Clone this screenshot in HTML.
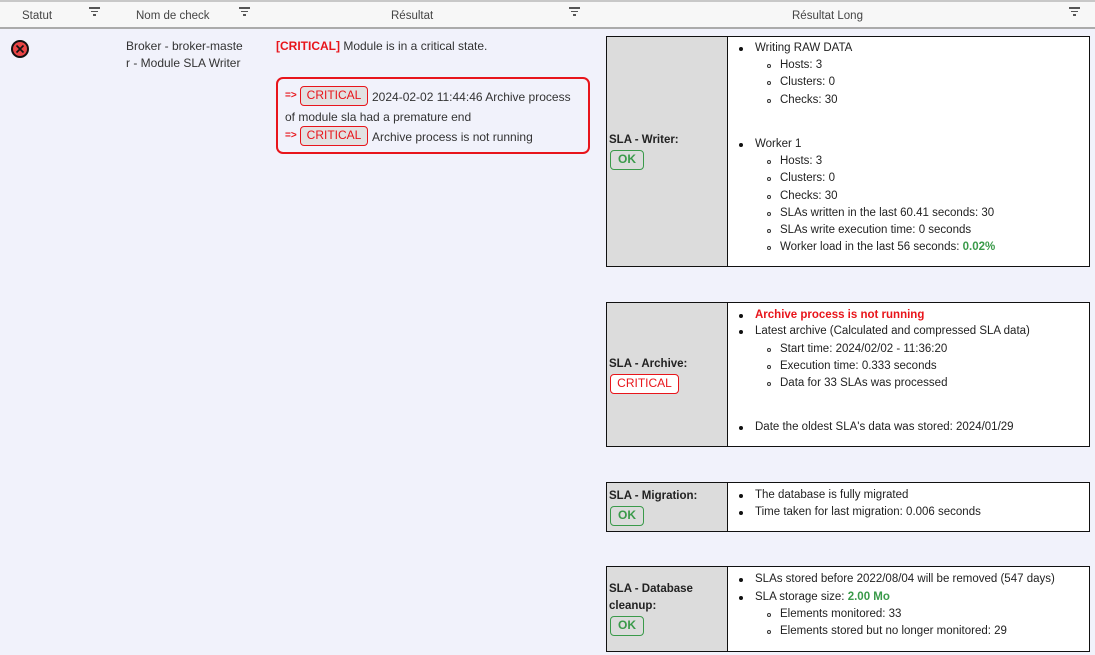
<!DOCTYPE html>
<html><head><meta charset="utf-8"><style>
*{margin:0;padding:0;box-sizing:border-box}
body{width:1095px;height:655px;overflow:hidden;background:#f1f2fb;font-family:"Liberation Sans",sans-serif;font-size:11.5px;color:#222;position:relative}
.a{position:absolute;white-space:nowrap;line-height:16px}
.hdr{position:absolute;left:0;top:0;width:1095px;height:29px;background:#f7f7f7;border-top:2px solid #c8c8c8;border-bottom:2px solid #ababab}
.h{position:absolute;top:8px;font-size:11.5px;color:#444}
.f{position:absolute;top:5px;width:11px;height:8px}
.f i{display:block;height:1.5px;background:#555;margin:0 auto 2px}
.tb{position:absolute;left:606px;width:484px;border:1px solid #111;background:#fff}
.tb .l{position:absolute;left:0;top:0;bottom:0;width:121px;background:#dcdcdc;border-right:1px solid #111}
.b{position:absolute;font-weight:bold;font-size:11.5px;line-height:17px;white-space:nowrap}
.badge{position:absolute;border:1px solid;border-radius:4px;font-size:12px;line-height:17px;height:20px;text-align:center}
.ok{color:#3a9a4a;border-color:#3a9a4a;font-weight:bold;width:34px}
.cr{color:#e8151b;border-color:#e8151b;background:#fff}
.dot:before{content:"";position:absolute;left:-16px;top:7px;width:4px;height:4px;border-radius:50%;background:#111}
.cir:before{content:"";position:absolute;left:-13px;top:7px;width:4px;height:4px;border-radius:50%;border:1px solid #333;box-sizing:border-box}
.t{font-size:12px;color:#333}
</style></head><body>
<div class="hdr">
<div class="h" style="left:22px">Statut</div>
<div class="f" style="left:89px"><i style="width:11px"></i><i style="width:7px"></i><i style="width:3px"></i></div>
<div class="h" style="left:136px">Nom de check</div>
<div class="f" style="left:239px"><i style="width:11px"></i><i style="width:7px"></i><i style="width:3px"></i></div>
<div class="h" style="left:391px">Résultat</div>
<div class="f" style="left:569px"><i style="width:11px"></i><i style="width:7px"></i><i style="width:3px"></i></div>
<div class="h" style="left:792px">Résultat Long</div>
<div class="f" style="left:1069px"><i style="width:11px"></i><i style="width:7px"></i><i style="width:3px"></i></div>
</div>

<svg style="position:absolute;left:10px;top:39px" width="20" height="20" viewBox="0 0 20 20"><circle cx="10" cy="10" r="9" fill="#111"/><circle cx="10" cy="10" r="7" fill="#e94545"/><path d="M6.5 6.5L13.5 13.5M13.5 6.5L6.5 13.5" stroke="#111" stroke-width="1.6"/></svg>

<div class="a t" style="left:126px;top:38px">Broker - broker-maste</div>
<div class="a t" style="left:126px;top:55px">r - Module SLA Writer</div>

<div class="a t" style="left:276px;top:38px"><span style="color:#e8151b;font-weight:bold">[CRITICAL]</span> Module is in a critical state.</div>

<div style="position:absolute;left:276px;top:77px;width:314px;height:77px;border:2px solid #e8151b;border-radius:7px"></div>
<div class="a" style="left:285px;top:88px;color:#e8151b;font-weight:bold;font-size:10px">=&gt;</div>
<div class="badge cr" style="left:300px;top:86px;width:68px;background:#e2e2e2">CRITICAL</div>
<div class="a t" style="left:372px;top:89px">2024-02-02 11:44:46 Archive process</div>
<div class="a t" style="left:285px;top:109px">of module sla had a premature end</div>
<div class="a" style="left:285px;top:128px;color:#e8151b;font-weight:bold;font-size:10px">=&gt;</div>
<div class="badge cr" style="left:300px;top:126px;width:68px;background:#e2e2e2">CRITICAL</div>
<div class="a t" style="left:372px;top:129px">Archive process is not running</div>

<!-- Table 1 -->
<div class="tb" style="top:36px;height:231px"><div class="l"></div></div>
<div class="b" style="left:609px;top:132px">SLA - Writer:</div>
<div class="badge ok" style="left:610px;top:150px">OK</div>
<div class="a dot" style="left:755px;top:40px">Writing RAW DATA</div>
<div class="a cir" style="left:780px;top:57px">Hosts: 3</div>
<div class="a cir" style="left:780px;top:74px">Clusters: 0</div>
<div class="a cir" style="left:780px;top:92px">Checks: 30</div>
<div class="a dot" style="left:755px;top:136px">Worker 1</div>
<div class="a cir" style="left:780px;top:153px">Hosts: 3</div>
<div class="a cir" style="left:780px;top:170px">Clusters: 0</div>
<div class="a cir" style="left:780px;top:188px">Checks: 30</div>
<div class="a cir" style="left:780px;top:205px">SLAs written in the last 60.41 seconds: 30</div>
<div class="a cir" style="left:780px;top:222px">SLAs write execution time: 0 seconds</div>
<div class="a cir" style="left:780px;top:239px">Worker load in the last 56 seconds: <b style="color:#3a9a4a">0.02%</b></div>

<!-- Table 2 -->
<div class="tb" style="top:302px;height:145px"><div class="l"></div></div>
<div class="b" style="left:609px;top:356px">SLA - Archive:</div>
<div class="badge cr" style="left:610px;top:374px;width:69px">CRITICAL</div>
<div class="a dot" style="left:755px;top:307px;color:#e8151b;font-weight:bold">Archive process is not running</div>
<div class="a dot" style="left:755px;top:323px">Latest archive (Calculated and compressed SLA data)</div>
<div class="a cir" style="left:780px;top:341px">Start time: 2024/02/02 - 11:36:20</div>
<div class="a cir" style="left:780px;top:358px">Execution time: 0.333 seconds</div>
<div class="a cir" style="left:780px;top:375px">Data for 33 SLAs was processed</div>
<div class="a dot" style="left:755px;top:419px">Date the oldest SLA's data was stored: 2024/01/29</div>

<!-- Table 3 -->
<div class="tb" style="top:482px;height:50px"><div class="l"></div></div>
<div class="b" style="left:609px;top:488px">SLA - Migration:</div>
<div class="badge ok" style="left:610px;top:506px">OK</div>
<div class="a dot" style="left:755px;top:487px">The database is fully migrated</div>
<div class="a dot" style="left:755px;top:504px">Time taken for last migration: 0.006 seconds</div>

<!-- Table 4 -->
<div class="tb" style="top:566px;height:86px"><div class="l"></div></div>
<div class="b" style="left:609px;top:581px">SLA - Database</div>
<div class="b" style="left:609px;top:598px">cleanup:</div>
<div class="badge ok" style="left:610px;top:616px">OK</div>
<div class="a dot" style="left:755px;top:571px">SLAs stored before 2022/08/04 will be removed (547 days)</div>
<div class="a dot" style="left:755px;top:589px">SLA storage size: <b style="color:#3a9a4a">2.00 Mo</b></div>
<div class="a cir" style="left:780px;top:606px">Elements monitored: 33</div>
<div class="a cir" style="left:780px;top:623px">Elements stored but no longer monitored: 29</div>
</body></html>
